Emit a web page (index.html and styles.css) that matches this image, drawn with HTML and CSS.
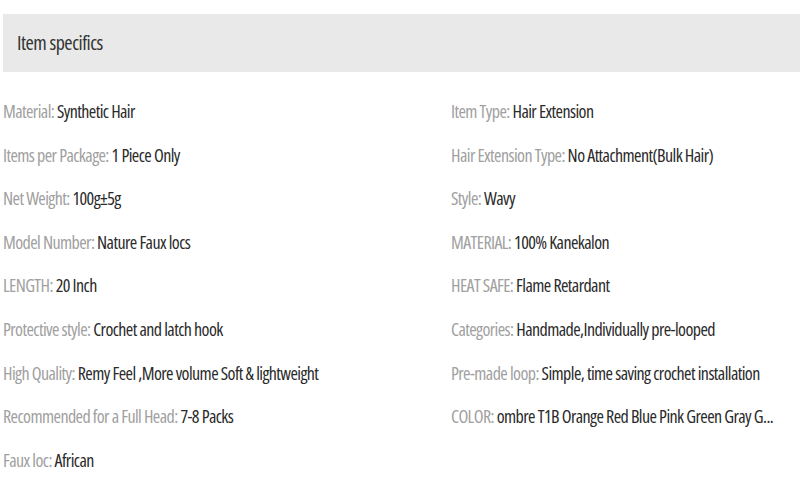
FILE: index.html
```html
<!DOCTYPE html>
<html>
<head>
<meta charset="utf-8">
<link rel="stylesheet" href="styles.css">
</head>
<body>
<div class="specs">
  <div class="specs-head">Item specifics</div>
  <ul class="specs-list">
    <li><span class="k">Material:</span> <span class="v">Synthetic Hair</span></li>
    <li><span class="k">Item Type:</span> <span class="v">Hair Extension</span></li>
    <li><span class="k">Items per Package:</span> <span class="v">1 Piece Only</span></li>
    <li><span class="k">Hair Extension Type:</span> <span class="v">No Attachment(Bulk Hair)</span></li>
    <li><span class="k">Net Weight:</span> <span class="v">100g±5g</span></li>
    <li><span class="k">Style:</span> <span class="v">Wavy</span></li>
    <li><span class="k">Model Number:</span> <span class="v">Nature Faux locs</span></li>
    <li><span class="k">MATERIAL:</span> <span class="v">100% Kanekalon</span></li>
    <li><span class="k">LENGTH:</span> <span class="v">20 Inch</span></li>
    <li><span class="k">HEAT SAFE:</span> <span class="v">Flame Retardant</span></li>
    <li><span class="k">Protective style:</span> <span class="v">Crochet and latch hook</span></li>
    <li><span class="k">Categories:</span> <span class="v">Handmade,Individually pre-looped</span></li>
    <li><span class="k">High Quality:</span> <span class="v">Remy Feel ,More volume Soft &amp; lightweight</span></li>
    <li><span class="k">Pre-made loop:</span> <span class="v">Simple, time saving crochet installation</span></li>
    <li><span class="k">Recommended for a Full Head:</span> <span class="v">7-8 Packs</span></li>
    <li><span class="k">COLOR:</span> <span class="v">ombre T1B Orange Red Blue Pink Green Gray G...</span></li>
    <li><span class="k">Faux loc:</span> <span class="v">African</span></li>
  </ul>
</div>
</body>
</html>
```
FILE: styles.css
```css
html, body {
  margin: 0;
  padding: 0;
  background: #ffffff;
}
body {
  font-family: "Open Sans", "Liberation Sans", sans-serif;
  font-stretch: 75%;
}
.specs {
  padding: 14px 0 0 3px;
}
.specs-head {
  background: #e9e9e9;
  height: 58px;
  line-height: 58px;
  padding-left: 14px;
  font-size: 20px;
  font-weight: 400;
  color: #333333;
  letter-spacing: -0.5px;
}
.specs-list {
  list-style: none;
  margin: 18px 0 0 0;
  padding: 0;
  display: grid;
  grid-template-columns: 448px 1fr;
  font-size: 18px;
  line-height: 43.6px;
  letter-spacing: -0.58px;
  white-space: nowrap;
}
.k {
  color: #a0a0a0;
}
.v {
  color: #2a2a2a;
}
```
